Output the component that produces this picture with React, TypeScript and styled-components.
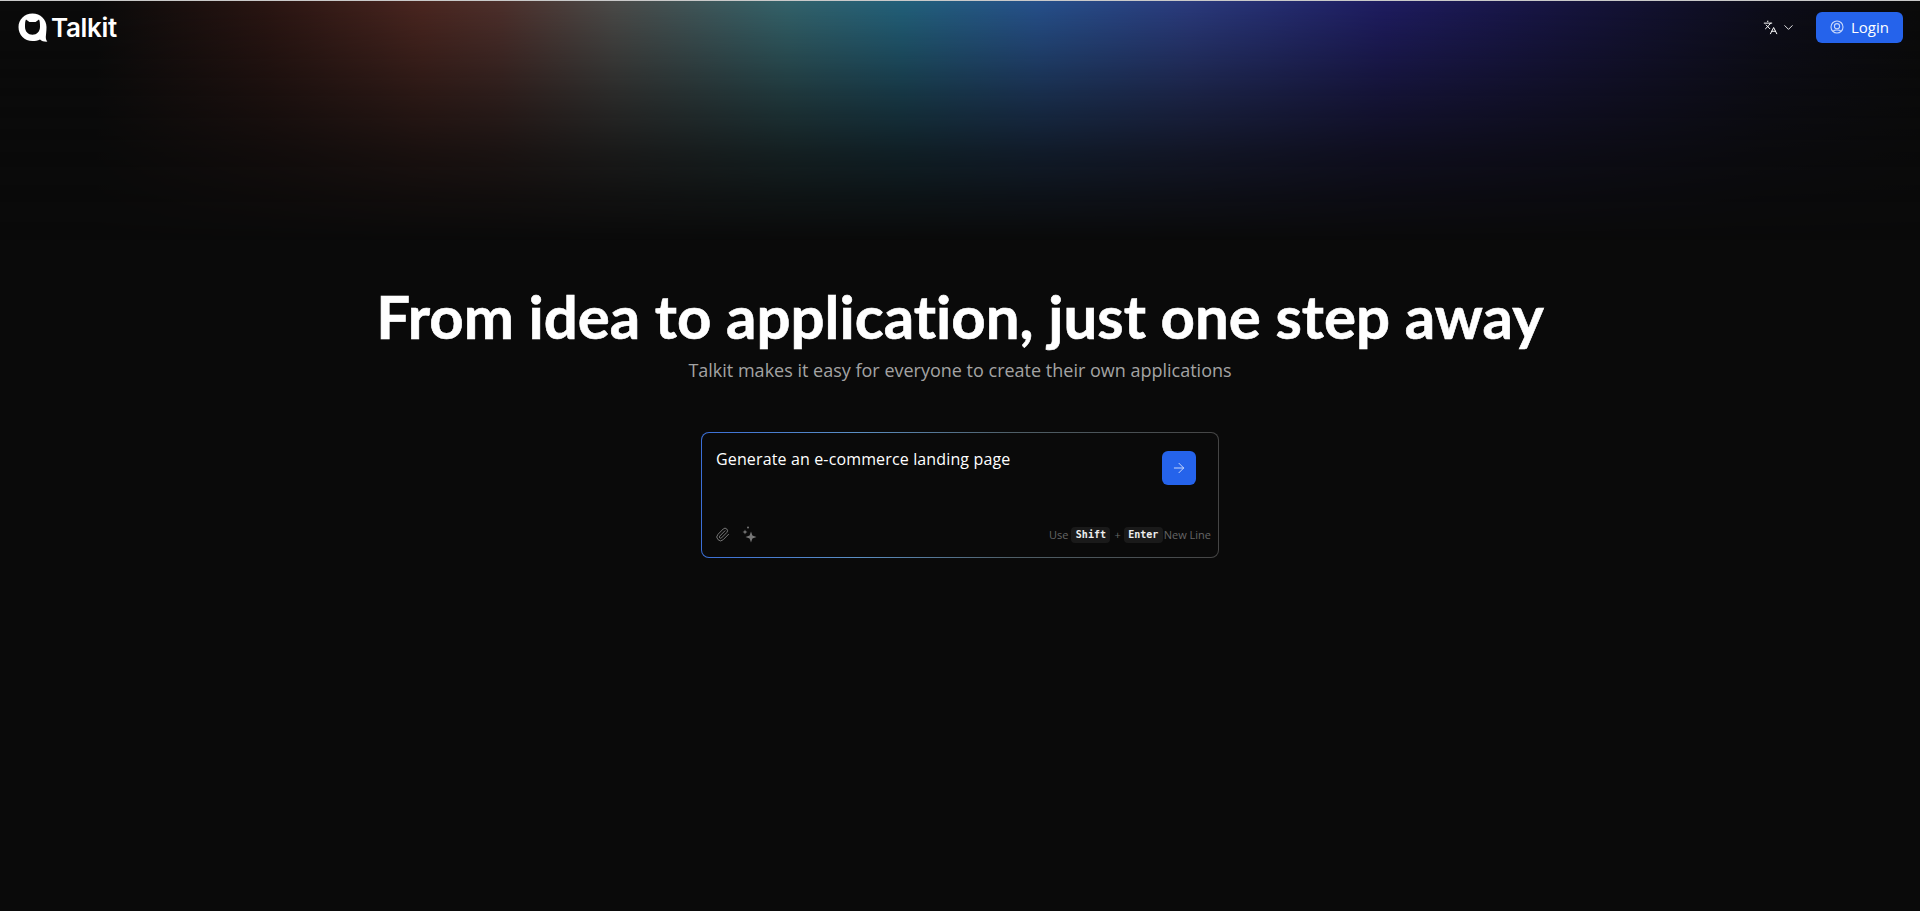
import styled, { createGlobalStyle } from 'styled-components';
import { ArrowRight, ChevronDown, Languages, Paperclip } from 'lucide-react';

const GlobalStyle = createGlobalStyle`
	html, body {
		margin: 0;
		padding: 0;
		height: 100%;
		background: #0a0a0a;
	}
	#root {
		height: 100%;
	}
	* {
		box-sizing: border-box;
	}
`;

const App = () => {
	return (
		<Page>
			<GlobalStyle />
			<Glow />
			<Header>
				<Logo>
					<svg width="30" height="30" viewBox="0 0 30 30">
						<path
							fillRule="evenodd"
							fill="#fff"
							d="M14.5 0.5 C22.5 0.5 28.5 6.5 28.5 14 C28.5 18 28 21.5 27.8 24 C27.8 26 28.4 27.5 29.4 28.6 C26.5 28.8 23.8 28.2 22 26.4 C19.8 27.6 17.2 28 14.5 28 C6.5 28 0.5 22 0.5 14 C0.5 6.5 6.5 0.5 14.5 0.5 Z M8 6.6 C7.2 8 7 10 7 13.8 C7 18.6 10.2 21.8 14.5 21.8 C18.8 21.8 22 18.6 22 13.8 C22 10 21.8 8 21 6.6 L17.6 9 H11.4 Z"
						/>
					</svg>
					<LogoText>Talkit</LogoText>
				</Logo>
				<Actions>
					<LangButton>
						<Languages size={15} strokeWidth={1.6} />
						<ChevronDown size={15} strokeWidth={1.4} />
					</LangButton>
					<LoginButton>
						<UserRing>
							<svg width="14" height="14" viewBox="0 0 14 14" fill="none" stroke="currentColor" strokeWidth="1.1">
								<circle cx="7" cy="7" r="6" />
								<circle cx="7" cy="6.2" r="2.6" />
								<path d="M3.2 11.2 C4.4 9.6 9.6 9.6 10.8 11.2" />
							</svg>
						</UserRing>
						Login
					</LoginButton>
				</Actions>
			</Header>
			<Hero>
				<Title>From idea to application, just one step away</Title>
				<Subtitle>Talkit makes it easy for everyone to create their own applications</Subtitle>
				<PromptBox>
					<PromptInner>
						<PromptTop>
							<PromptText>Generate an e-commerce landing page</PromptText>
							<SendButton>
								<ArrowRight size={16} strokeWidth={1.5} />
							</SendButton>
						</PromptTop>
						<PromptBottom>
							<Tools>
								<Paperclip size={15} strokeWidth={1.6} />
								<svg width="15" height="17" viewBox="0 0 15 17" fill="currentColor">
									<path d="M9 5.5 L10.4 9.6 L14.5 11 L10.4 12.4 L9 16.5 L7.6 12.4 L3.5 11 L7.6 9.6 Z" />
									<path d="M3 3.5 L3.7 5.3 L5.5 6 L3.7 6.7 L3 8.5 L2.3 6.7 L0.5 6 L2.3 5.3 Z" />
									<circle cx="6" cy="1.5" r="1" />
								</svg>
							</Tools>
							<Hint>
								<HintWord>Use</HintWord>
								<Key>Shift</Key>
								<Plus>+</Plus>
								<Key>Enter</Key>
								<span>New Line</span>
							</Hint>
						</PromptBottom>
					</PromptInner>
				</PromptBox>
			</Hero>
		</Page>
	);
};

export default App;

const Page = styled.div`
	position: relative;
	height: 911px;
	overflow: hidden;
	background: #0a0a0a;
	border-top: 1px solid #c9c9c9;
	color: #fff;
	font-family: 'Open Sans', 'Noto Sans', sans-serif;
`;

const Glow = styled.div`
	position: absolute;
	top: 0;
	left: 0;
	right: 0;
	height: 250px;
	background: linear-gradient(
		90deg,
		#0a0a0a 5%,
		#2a1512 14%,
		#4a2620 22%,
		#4d2f2b 26%,
		#4a4a48 32%,
		#33626a 41%,
		#22607a 47%,
		#26508a 54%,
		#2a3a7c 62%,
		#1e1c60 72%,
		#171544 80%,
		#0d0d1a 92%,
		#0a0a0a 100%
	);
	mask-image: linear-gradient(
		180deg,
		#000 0,
		rgba(0, 0, 0, 0.75) 50px,
		rgba(0, 0, 0, 0.48) 100px,
		rgba(0, 0, 0, 0.25) 150px,
		rgba(0, 0, 0, 0.1) 200px,
		transparent 240px
	);
`;

const Header = styled.header`
	position: relative;
	display: flex;
	align-items: center;
	justify-content: space-between;
	height: 53px;
	padding: 0 17px 0 18px;
`;

const Logo = styled.div`
	display: flex;
	align-items: center;
	gap: 3px;
`;

const LogoText = styled.span`
	font-family: Inter, sans-serif;
	font-size: 26px;
	font-weight: 600;
	letter-spacing: -0.3px;
`;

const Actions = styled.div`
	display: flex;
	align-items: center;
	gap: 20px;
`;

const LangButton = styled.div`
	display: flex;
	align-items: center;
	gap: 3px;
	color: #fff;
`;

const LoginButton = styled.button`
	display: flex;
	align-items: center;
	gap: 7px;
	width: 87px;
	height: 31px;
	padding: 0 0 2px 14px;
	border: none;
	border-radius: 6px;
	background: #2563eb;
	color: #fff;
	font-family: inherit;
	font-size: 15px;
`;

const UserRing = styled.span`
	display: flex;
	color: #c8d8fb;
`;

const Hero = styled.main`
	position: relative;
	display: flex;
	flex-direction: column;
	align-items: center;
	padding-top: 222px;
`;

const Title = styled.h1`
	margin: 0;
	font-family: Lato, 'Open Sans', sans-serif;
	font-size: 60px;
	font-variant-ligatures: none;
	font-weight: 700;
	line-height: 80px;
	white-space: nowrap;
	-webkit-text-stroke: 0.6px #fff;
`;

const Subtitle = styled.p`
	margin: 0;
	color: #a3a3a3;
	font-size: 18px;
	line-height: 28px;
`;

const PromptBox = styled.div`
	width: 518px;
	height: 126px;
	margin-top: 48px;
	padding: 1px;
	border-radius: 8px;
	background: linear-gradient(90deg, #3b6fd8 0%, #5b8fc4 30%, #4f5f68 60%, #454545 100%);
`;

const PromptInner = styled.div`
	display: flex;
	flex-direction: column;
	justify-content: space-between;
	height: 100%;
	padding: 18px 7px 14px 13px;
	border-radius: 7px;
	background: #0a0a0a;
`;

const PromptTop = styled.div`
	display: flex;
	align-items: flex-start;
	justify-content: space-between;
	padding-right: 15px;
`;

const PromptText = styled.div`
	margin-left: 1px;
	font-size: 16px;
	font-weight: 500;
	letter-spacing: 0.14px;
	line-height: 16px;
`;

const SendButton = styled.button`
	display: flex;
	align-items: center;
	justify-content: center;
	width: 34px;
	height: 34px;
	padding: 0;
	border: none;
	border-radius: 6px;
	background: #2563eb;
	color: #c8d8fb;
`;

const PromptBottom = styled.div`
	display: flex;
	align-items: center;
	justify-content: space-between;
`;

const Tools = styled.div`
	display: flex;
	align-items: center;
	gap: 12px;
	color: #777;
`;

const Hint = styled.div`
	display: flex;
	align-items: center;
	gap: 1px;
	color: #666;
	font-size: 11px;
`;

const HintWord = styled.span`
	margin-right: 2px;
`;

const Key = styled.kbd`
	width: 39px;
	height: 16px;
	border-radius: 4px;
	background: #1a1a1a;
	color: #eee;
	font-family: 'DejaVu Sans Mono', monospace;
	font-size: 10px;
	font-weight: 700;
	line-height: 16px;
	text-align: center;
`;

const Plus = styled.span`
	margin: 0 2px 0 3px;
`;
